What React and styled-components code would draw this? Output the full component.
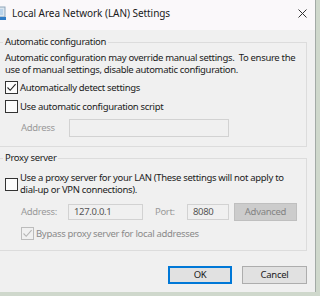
import React from "react";
import styled, { createGlobalStyle } from "styled-components";

const GlobalStyle = createGlobalStyle`
  body {
    margin: 0;
    background: #cfd8cc;
    font-family: "Noto Sans", "Open Sans", sans-serif;
    color: #1b1b1b;
  }
`;

const Screen = styled.div`
  width: 320px;
  height: 296px;
  overflow: hidden;
  background: #cfd8cc;
`;

const Window = styled.div`
  box-sizing: border-box;
  width: 316px;
  height: 292px;
  background: #f0f0f0;
  border-right: 1px solid #a3aaa6;
  display: flex;
  flex-direction: column;
`;

const TitleBar = styled.div`
  box-sizing: border-box;
  height: 30px;
  padding-bottom: 4px;
  background: #faf8fa;
  display: flex;
  align-items: center;
`;

const AppIcon = styled.svg`
  margin-left: -10px;
  flex: none;
`;

const Title = styled.span`
  margin-left: 6px;
  font-size: 10px;
  letter-spacing: -0.05px;
  line-height: 12px;
  white-space: nowrap;
`;

const Close = styled.svg`
  margin-left: auto;
  margin-right: 8px;
  flex: none;
`;

const Body = styled.div`
  padding: 6px 8px 0 0;
  display: flex;
  flex-direction: column;
  font-size: 9.5px;
  letter-spacing: -0.32px;
  line-height: 12px;
  white-space: nowrap;
`;

const Group = styled.fieldset`
  margin: ${(p) => (p.$first ? "0" : "5px 0 0")};
  padding: ${(p) => p.$pad};
  border: 1px solid #dcdcdc;
  border-left: none;
  min-width: 0;
`;

const Legend = styled.legend`
  padding: 0 2px;
  margin-left: -2px;
  line-height: 12px;
`;

const Text = styled.p`
  margin: 0;
`;

const CheckRow = styled.label`
  display: flex;
  align-items: center;
  gap: 2px;
  margin-top: ${(p) => p.$top || 0}px;
  padding-left: ${(p) => p.$indent || 0}px;
  color: ${(p) => (p.$disabled ? "#8a8a8a" : "inherit")};
`;

const Box = styled.span`
  box-sizing: border-box;
  flex: none;
  width: 13px;
  height: 13px;
  border: 1px solid ${(p) => (p.$disabled ? "#bcbcbc" : "#333")};
  background: ${(p) => (p.$disabled ? "#f0f0f0" : "#fcfcfc")};
  display: flex;
  align-items: center;
  justify-content: center;
`;

const FieldRow = styled.div`
  display: flex;
  align-items: center;
  height: 18px;
  margin-top: ${(p) => p.$top}px;
  padding-left: 16px;
`;

const FieldLabel = styled.span`
  width: ${(p) => p.$w}px;
  flex: none;
  color: #9a9a9a;
`;

const Input = styled.div`
  box-sizing: border-box;
  width: ${(p) => p.$w}px;
  height: ${(p) => p.$h || 16}px;
  border: 1px solid #d2d2d2;
  padding-left: 5px;
  display: flex;
  align-items: center;
  color: #555;
  flex: none;
`;

const Spacer = styled.span`
  width: ${(p) => p.$w}px;
  flex: none;
`;

const Button = styled.button`
  box-sizing: border-box;
  width: ${(p) => p.$w}px;
  height: 18px;
  padding: 0;
  font: inherit;
  letter-spacing: -0.3px;
  background: ${(p) => (p.$disabled ? "#cccccc" : "#e1e1e1")};
  color: ${(p) => (p.$disabled ? "#838383" : "#1b1b1b")};
  border: ${(p) =>
    p.$primary ? "2px solid #0078d7" : p.$disabled ? "1px solid #bfbfbf" : "1px solid #adadad"};
  flex: none;
`;

const Buttons = styled.div`
  display: flex;
  justify-content: flex-end;
  gap: 10px;
  margin-top: 15px;
`;

const Check = ({ color }) => (
  <svg width="11" height="11" viewBox="0 0 11 11">
    <path d="M1.5 5.5 L4.2 8.3 L9.6 2.2" fill="none" stroke={color} strokeWidth="1.1" />
  </svg>
);

const CheckBox = ({ checked, disabled, indent, top, children }) => (
  <CheckRow $indent={indent} $top={top} $disabled={disabled}>
    <Box $disabled={disabled}>{checked && <Check color={disabled ? "#b5b5b5" : "#222"} />}</Box>
    <span>{children}</span>
  </CheckRow>
);

export default function App() {
  return (
    <Screen>
      <GlobalStyle />
      <Window>
        <TitleBar>
          <AppIcon width="16" height="16" viewBox="0 0 16 16">
            <rect x="1" y="2" width="14" height="10" fill="#dbe6ef" stroke="#8fa6ba" />
            <rect x="3" y="4" width="10" height="6" fill="#b9d3ea" />
            <rect x="4" y="12" width="12" height="3" fill="#2e7bc6" />
          </AppIcon>
          <Title>Local Area Network (LAN) Settings</Title>
          <Close width="9" height="9" viewBox="0 0 9 9">
            <path d="M0.5 0.5 L8.5 8.5 M8.5 0.5 L0.5 8.5" stroke="#333" strokeWidth="1" />
          </Close>
        </TitleBar>
        <Body>
          <Group $first $pad="4px 0 9px 5px">
            <Legend>Automatic configuration</Legend>
            <Text>
              Automatic configuration may override manual settings.&nbsp; To ensure the
              <br />
              use of manual settings, disable automatic configuration.
            </Text>
            <CheckBox checked top={5}>
              Automatically detect settings
            </CheckBox>
            <CheckBox top={6}>Use automatic configuration script</CheckBox>
            <FieldRow $top={6}>
              <FieldLabel $w={48}>Address</FieldLabel>
              <Input $w={160} $h={18} />
            </FieldRow>
          </Group>
          <Group $pad="8px 0 10px 5px">
            <Legend>Proxy server</Legend>
            <CheckBox>
              Use a proxy server for your LAN (These settings will not apply to
              <br />
              dial-up or VPN connections).
            </CheckBox>
            <FieldRow $top={7}>
              <FieldLabel $w={47}>Address:</FieldLabel>
              <Input $w={75}>127.0.0.1</Input>
              <Spacer $w={12} />
              <FieldLabel $w={32}>Port:</FieldLabel>
              <Input $w={42}>8080</Input>
              <Spacer $w={5} />
              <Button $w={63} $disabled>
                Advanced
              </Button>
            </FieldRow>
            <CheckBox checked disabled indent={16} top={6}>
              Bypass proxy server for local addresses
            </CheckBox>
          </Group>
          <Buttons>
            <Button $w={64} $primary>
              OK
            </Button>
            <Button $w={65}>Cancel</Button>
          </Buttons>
        </Body>
      </Window>
    </Screen>
  );
}
